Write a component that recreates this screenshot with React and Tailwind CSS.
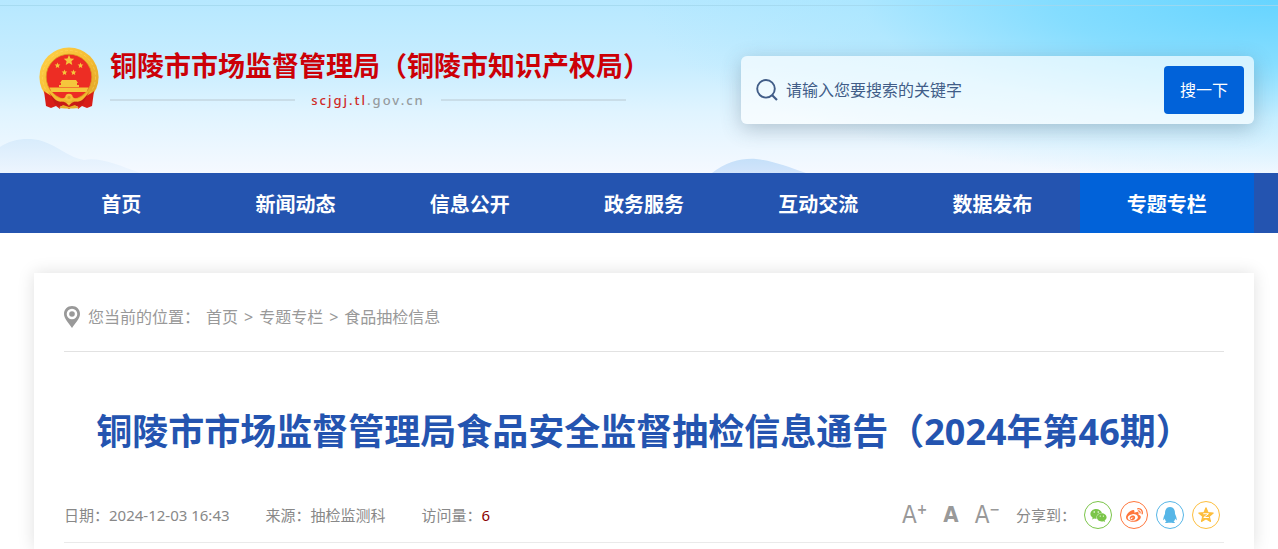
import { useState } from "react";
import { FaWeixin, FaWeibo, FaQq } from "react-icons/fa";

const navLinks = ["首页", "新闻动态", "信息公开", "政务服务", "互动交流", "数据发布", "专题专栏"];

const crumbs = ["首页", "专题专栏", "食品抽检信息"];

const STAR = "0,-10 2.8,-3.6 9.5,-3.1 4.4,1.4 5.9,8.1 0,4.6 -5.9,8.1 -4.4,1.4 -9.5,-3.1 -2.8,-3.6";

function Emblem() {
  return (
    <svg viewBox="0 0 60 62" className="mt-px h-[62px] w-[60px] shrink-0" aria-hidden="true">
      <defs>
        <linearGradient id="gold" x1="0" y1="0" x2="1" y2="1">
          <stop offset="0" stopColor="#ffd24a" />
          <stop offset="0.5" stopColor="#f6bd33" />
          <stop offset="1" stopColor="#dca025" />
        </linearGradient>
      </defs>
      <circle cx="30" cy="30" r="29.6" fill="url(#gold)" />
      <circle cx="30" cy="30" r="26.5" fill="none" stroke="#ffe271" strokeWidth="1" strokeDasharray="3 2" opacity="0.4" />
      <circle cx="30" cy="30" r="22.8" fill="#ed2d24" stroke="#d99a22" strokeWidth="0.8" />
      <g fill="#f5c63c">
        <polygon points={STAR} transform="translate(30 13.5) scale(0.55)" />
        <polygon points={STAR} transform="translate(18.5 18.5) scale(0.3)" />
        <polygon points={STAR} transform="translate(41.5 18.5) scale(0.3)" />
        <polygon points={STAR} transform="translate(25.5 25.5) scale(0.3)" />
        <polygon points={STAR} transform="translate(34.5 25.5) scale(0.3)" />
        <path d="M23 33 H37 L39 36 H21Z" />
        <path d="M22 36 H38 V38 H40 V40 H20 V38 H22Z" />
        <path d="M10.5 40.5 H49.5 L47.5 45 H12.5Z" />
      </g>
      <path d="M5 44 C9 48 18 51 23 54 L21 62 L17 59 L12 61 L7 59Z" fill="#d81d18" />
      <path d="M55 44 C51 48 42 51 37 54 L39 62 L43 59 L48 61 L53 59Z" fill="#d81d18" />
      <path d="M10 45 C18 58 25 51 30 59 C35 51 42 58 50 45 L44 57 C39 60 35 58 30 62 C25 58 21 60 16 57Z" fill="#c71a16" />
      <path d="M11 44 C16 50 21 53 25 51 C27 49 33 49 35 51 C39 53 44 50 49 44 C46 54 38 57 34 53 L30 56 L26 53 C22 57 14 54 11 44Z" fill="#f4bb31" />
      <circle cx="30" cy="50.5" r="3.8" fill="#f5c03a" />
      <circle cx="30" cy="50.5" r="1.6" fill="#dda326" />
      <path d="M20 61 L24 58 L30 60 L36 58 L40 61 L34 61.5 H26Z" fill="#e9ae2b" />
    </svg>
  );
}

function Scenery() {
  return (
    <svg viewBox="0 0 1278 173" preserveAspectRatio="none" className="col-start-1 row-start-1 h-full w-full" aria-hidden="true">
      <defs>
        <linearGradient id="hillLeft" x1="0" y1="0" x2="0" y2="1">
          <stop offset="0" stopColor="#d8ecfc" />
          <stop offset="1" stopColor="#edf5fe" />
        </linearGradient>
        <linearGradient id="hillMid" x1="0" y1="0" x2="0" y2="1">
          <stop offset="0" stopColor="#c5e0f9" />
          <stop offset="1" stopColor="#d2e4fb" />
        </linearGradient>
      </defs>
      <path d="M0 5.5 H1278" stroke="#a3d8ee" strokeWidth="1" opacity="0.8" />
      <path d="M0 147 C12 139 28 137 42 141 C58 146 70 158 84 160 C100 157 118 165 140 173 H0Z" fill="url(#hillLeft)" />
      <path d="M712 173 C726 162 742 158 756 159 C774 161 788 167 806 173Z" fill="url(#hillMid)" />
    </svg>
  );
}

function Header() {
  return (
    <header className="grid bg-[radial-gradient(ellipse_50%_105%_at_100%_0%,#66d4ff_0%,#78daffd0_35%,#9fe4ff70_65%,#c8eeff00_100%),linear-gradient(180deg,#b6e8ff_0%,#c8edff_38%,#e0f4ff_65%,#f5f9ff_100%)]">
      <Scenery />
      <div className="col-start-1 row-start-1 flex items-start justify-between gap-8 pt-[46px] pr-6 pb-[49px] pl-[39px]">
        <a href="#" className="flex shrink-0 items-start gap-[11px]">
          <Emblem />
          <div>
            <div className="text-[27px] leading-10 font-bold whitespace-nowrap text-[#cc0007]">
              铜陵市市场监督管理局（铜陵市知识产权局）
            </div>
            <div className="mt-0.5 mr-6 flex items-center gap-4 text-[13px] leading-6">
              <span className="h-0.5 flex-1 bg-[#c9dde8]" />
              <span className="font-medium tracking-[2px] text-[#969b9e]">
                <span className="text-[#cf2a27]">scjgj.tl</span>.gov.cn
              </span>
              <span className="h-0.5 flex-1 bg-[#c9dde8]" />
            </div>
          </div>
        </a>
        <form
          onSubmit={(e) => e.preventDefault()}
          className="mt-2.5 flex max-w-[513px] flex-1 items-center rounded-md bg-white/65 p-2.5 shadow-[0_5px_20px_rgba(60,80,100,0.3)]"
        >
          <svg viewBox="0 0 22 22" className="ml-[5px] size-[22px] shrink-0" fill="none" stroke="#415d88" strokeWidth="1.9" aria-hidden="true">
            <circle cx="10" cy="9.8" r="8.8" />
            <path d="M16 16 L21 21" strokeWidth="2.2" />
          </svg>
          <input
            type="text"
            aria-label="搜索"
            placeholder="请输入您要搜索的关键字"
            className="ml-2 h-12 min-w-0 flex-1 bg-transparent text-base text-[#415d88] outline-none placeholder:text-[#415d88]"
          />
          <button type="submit" className="h-12 w-20 rounded-sm bg-[#0162d9] text-base text-white">
            搜一下
          </button>
        </form>
      </div>
    </header>
  );
}

function Nav() {
  const [active, setActive] = useState("专题专栏");
  return (
    <nav className="flex bg-[#2454b0] pr-6 pl-[34px]">
      {navLinks.map((link) => (
        <a
          key={link}
          href="#"
          onClick={() => setActive(link)}
          className={`flex-1 pt-1 text-center text-xl leading-14 font-bold text-white ${
            active === link ? "bg-[#0162d9]" : ""
          }`}
        >
          {link}
        </a>
      ))}
    </nav>
  );
}

function FontTools() {
  return (
    <div className="flex items-center gap-4 font-['DejaVu_Sans_Condensed','DejaVu_Sans',sans-serif] text-2xl leading-7 text-[#999]">
      <button type="button" aria-label="放大字体" className="flex items-start">
        A<span className="text-sm leading-4 font-bold">+</span>
      </button>
      <button type="button" aria-label="默认字体" className="text-[22px] font-bold">A</button>
      <button type="button" aria-label="缩小字体" className="flex items-start">
        A<span className="text-sm leading-4 font-bold">−</span>
      </button>
    </div>
  );
}

function Share() {
  const circle = "flex size-7 items-center justify-center rounded-full border";
  return (
    <div className="mr-1 flex items-center gap-2">
      <span>分享到：</span>
      <a href="#" aria-label="微信" className={`${circle} border-[#7bc549] text-[#7bc549]`}>
        <FaWeixin size={17} />
      </a>
      <a href="#" aria-label="微博" className={`${circle} border-[#ff763b] text-[#ff763b]`}>
        <FaWeibo size={17} />
      </a>
      <a href="#" aria-label="QQ" className={`${circle} border-[#56b6e7] text-[#56b6e7]`}>
        <FaQq size={16} />
      </a>
      <a href="#" aria-label="QQ空间" className={`${circle} border-[#fdbe3d] text-[#fdbe3d]`}>
        <svg viewBox="-10.5 -11 21 21" className="size-4" fill="currentColor" aria-hidden="true">
          <polygon points={STAR} stroke="currentColor" strokeWidth="1.4" strokeLinejoin="round" />
          <path d="M-3.6 -2.2 H3.2 L-3 2.8 H3.8" fill="none" stroke="#fff" strokeWidth="1.3" />
        </svg>
      </a>
    </div>
  );
}

export default function App() {
  return (
    <div className="flex min-h-screen flex-col bg-white font-['Noto_Sans','Noto_Sans_CJK_SC',sans-serif]">
      <Header />
      <Nav />

      {/* ARTICLE */}
      <main className="mt-10 mr-6 ml-[34px] flex-1 bg-white px-[30px] shadow-[0_0_16px_rgba(0,0,0,0.13)]">
        <div className="flex items-center gap-1.5 border-b border-[#e2e2e2] pt-[30px] pb-5 text-base leading-7 text-[#999]">
          <svg viewBox="0 0 16 22" className="mr-0.5 h-[22px] w-4" aria-hidden="true">
            <path
              d="M8 0 C3.4 0 0 3.5 0 8 C0 13 5 17 8 22 C11 17 16 13 16 8 C16 3.5 12.6 0 8 0Z M8 2.7 A5.3 5.3 0 1 1 8 13.3 A5.3 5.3 0 1 1 8 2.7Z"
              fill="#999"
              fillRule="evenodd"
            />
            <circle cx="8" cy="8" r="2.8" fill="#999" />
          </svg>
          <span>您当前的位置：</span>
          {crumbs.map((crumb, i) => (
            <span key={crumb} className="flex gap-1.5">
              {i > 0 && <span>&gt;</span>}
              <a href="#">{crumb}</a>
            </span>
          ))}
        </div>

        <h1 className="mt-14 text-center text-4xl leading-12 font-bold text-[#2454b0]">
          铜陵市市场监督管理局食品安全监督抽检信息通告（2024年第46期）
        </h1>

        <div className="mt-[45px] flex items-center justify-between border-b border-[#eaeaea] pb-[13px] text-[15px] leading-7 text-[#888]">
          <div className="flex gap-9">
            <span>日期：2024-12-03 16:43</span>
            <span>来源：抽检监测科</span>
            <span>
              访问量：<span className="text-[#8b0000]">6</span>
            </span>
          </div>
          <div className="flex items-center gap-4">
            <FontTools />
            <Share />
          </div>
        </div>
      </main>
    </div>
  );
}
